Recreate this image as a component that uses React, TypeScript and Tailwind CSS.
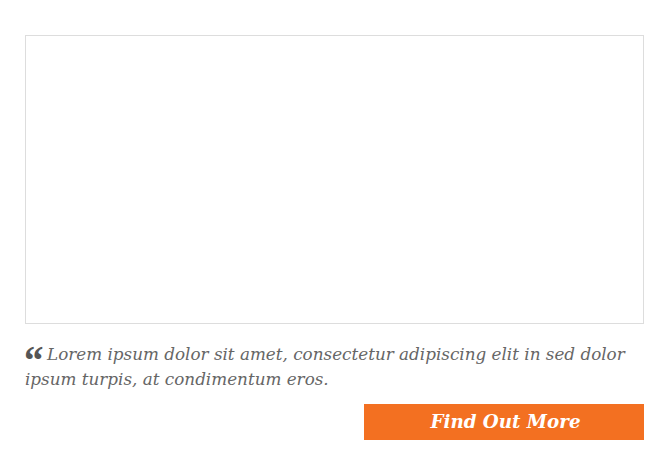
export default function App() {
  return (
    <div className="w-[670px] h-[472px] bg-white pt-[35px] pl-[25px]" style={{ fontFamily: '"DejaVu Serif", "Liberation Serif", serif' }}>
      <div className="w-[619px]">
        <div className="h-[289px] border border-[#dddddd] bg-white" />
        <p className="mt-[18px] text-[16.8px] leading-[25px] italic text-[#666666]">
          <span
            className="inline-block w-[23px] -ml-[1px] not-italic font-bold text-[#555555] text-[39px] leading-[0] relative top-[14px]"
            style={{ fontFamily: '"Liberation Serif", serif' }}
          >
            &ldquo;
          </span>
          Lorem ipsum dolor sit amet, consectetur adipiscing elit in sed dolor ipsum turpis, at condimentum eros.
        </p>
        <div className="flex justify-end mt-[12px]">
          <a className="w-[280px] h-[36px] bg-[#f37021] text-white italic font-bold text-[18.3px] flex items-center justify-center pl-[3px]">
            Find Out More
          </a>
        </div>
      </div>
    </div>
  );
}
